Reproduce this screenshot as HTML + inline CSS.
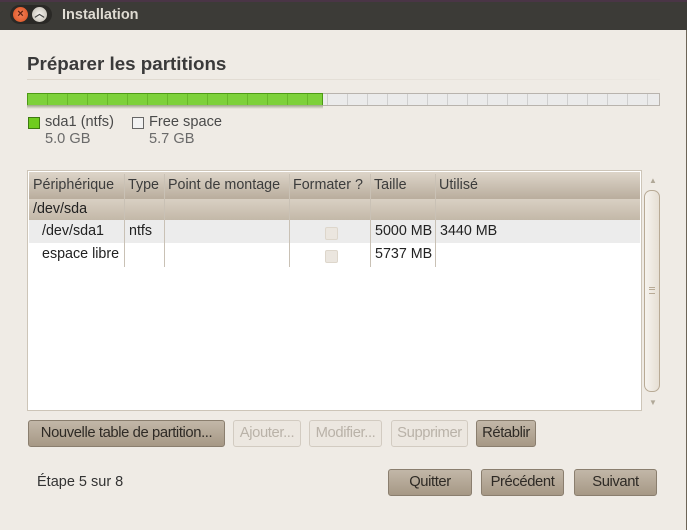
<!DOCTYPE html><html><head><style>
body{margin:0;width:687px;height:530px;overflow:hidden;background:#3c3b37;font-family:"Liberation Sans",sans-serif;font-size:14.3px;color:#3c3c3c}
.a{position:absolute}
.win{left:0;top:30px;width:686px;height:500px;background:#efebe5;border-right:1px solid #6d6557}
.btn{position:absolute;box-sizing:border-box;border:1px solid #8a7e6e;border-radius:3px;background:linear-gradient(#c2b7a8,#a69885);text-align:center;line-height:24px;font-size:14.8px;color:#2e2a25;letter-spacing:-0.4px;white-space:nowrap}
.dis{border-color:#d2cbc1;background:#ece7e0;color:#b9b2a8}
.cell{position:absolute;white-space:nowrap}
.vl{position:absolute;width:1px;background:#c9c1b5}
.cb{position:absolute;width:11px;height:11px;border:1px solid #ddd6cb;border-radius:2px;background:#ebe6df}
</style></head><body>
<div class="a" style="left:0;top:0;width:687px;height:2px;background:#4a3546"></div>
<div class="a" style="left:10px;top:5px;width:42px;height:19px;border-radius:10px;background:#2a2926"></div>
<div class="a" style="left:13px;top:7px;width:15px;height:15px;border-radius:50%;background:radial-gradient(#f3815a,#d9501e);color:#5a2010;font-size:11px;text-align:center;line-height:15px;font-weight:bold">×</div>
<div class="a" style="left:32px;top:7px;width:15px;height:15px;border-radius:50%;background:radial-gradient(#f5f3ee,#bdb8ae);color:#444;font-size:10px;text-align:center;line-height:16px;font-weight:bold">︿</div>
<div class="a" style="left:62px;top:7px;color:#dfdbd2;font-weight:bold;font-size:14.5px">Installation</div>
<div class="a win"></div>
<div class="a" style="left:27px;top:53px;font-weight:bold;font-size:18.8px;color:#3a3a3a">Préparer les partitions</div>
<div class="a" style="left:27px;top:79px;width:633px;height:1px;background:linear-gradient(90deg,#ddd6cc,#ece8e2)"></div>
<div class="a" style="left:27px;top:93px;width:633px;height:13px;box-sizing:border-box;border:1px solid #b8b3ad;background:repeating-linear-gradient(90deg,#ebebeb 0 19px,#cfcfcf 19px 20px)"></div>
<div class="a" style="left:27px;top:93px;width:296px;height:13px;box-sizing:border-box;border:1px solid #4c9a14;background:repeating-linear-gradient(90deg,#7dd13a 0 19px,#69b82a 19px 20px)"></div>
<div class="a" style="left:27px;top:105px;width:296px;height:4px;background:linear-gradient(#9aa585,#efebe5)"></div>
<div class="a" style="left:28px;top:117px;width:10px;height:10px;border:1px solid #3d7a10;background:#6fcc1e"></div>
<div class="a" style="left:45px;top:114px;font-size:14.6px;color:#4a4a4a">sda1 (ntfs)</div>
<div class="a" style="left:45px;top:131px;font-size:14.6px;color:#6a6a6a">5.0 GB</div>
<div class="a" style="left:132px;top:117px;width:10px;height:10px;border:1px solid #666;background:#f2f2f2"></div>
<div class="a" style="left:149px;top:114px;font-size:14.6px;color:#4a4a4a">Free space</div>
<div class="a" style="left:149px;top:131px;font-size:14.6px;color:#6a6a6a">5.7 GB</div>
<div class="a" style="left:27px;top:170px;width:615px;height:241px;box-sizing:border-box;border:1px solid #cdc5b8;background:#fff"></div>
<div class="a" style="left:29px;top:172px;width:611px;height:27px;background:linear-gradient(#ddd5c9,#b9ad9d)"></div>
<div class="a" style="left:29px;top:199px;width:611px;height:21px;background:linear-gradient(#d9d0c3,#c3b8a8)"></div>
<div class="a" style="left:29px;top:220px;width:611px;height:23px;background:#ececec"></div>
<div class="vl" style="left:124px;top:174px;height:93px"></div>
<div class="vl" style="left:164px;top:174px;height:93px"></div>
<div class="vl" style="left:289px;top:174px;height:93px"></div>
<div class="vl" style="left:370px;top:174px;height:93px"></div>
<div class="vl" style="left:435px;top:174px;height:93px"></div>
<div class="cell" style="left:33px;top:177px">Périphérique</div>
<div class="cell" style="left:128px;top:177px">Type</div>
<div class="cell" style="left:168px;top:177px">Point de montage</div>
<div class="cell" style="left:293px;top:177px">Formater ?</div>
<div class="cell" style="left:374px;top:177px">Taille</div>
<div class="cell" style="left:439px;top:177px">Utilisé</div>
<div class="cell" style="left:33px;top:201px;color:#222">/dev/sda</div>
<div class="cell" style="left:42px;top:223px;color:#222">/dev/sda1</div>
<div class="cell" style="left:129px;top:223px;color:#222">ntfs</div>
<div class="cb" style="left:325px;top:227px"></div>
<div class="cell" style="left:375px;top:223px;color:#222">5000 MB</div>
<div class="cell" style="left:440px;top:223px;color:#222">3440 MB</div>
<div class="cell" style="left:42px;top:246px;color:#222">espace libre</div>
<div class="cb" style="left:325px;top:250px"></div>
<div class="cell" style="left:375px;top:246px;color:#222">5737 MB</div>
<div class="a" style="left:649px;top:176px;font-size:8px;color:#b0a898">▲</div>
<div class="a" style="left:649px;top:398px;font-size:8px;color:#b0a898">▼</div>
<div class="a" style="left:644px;top:190px;width:16px;height:202px;box-sizing:border-box;border:1px solid #b8aa95;border-radius:7px;background:linear-gradient(90deg,#f6f3ee,#e6dfd4)"></div>
<div class="a" style="left:649px;top:287px;width:6px;height:5px;border-top:1px solid #b8aa95;border-bottom:1px solid #b8aa95"></div>
<div class="a" style="left:649px;top:289px;width:6px;height:1px;background:#b8aa95"></div>
<div class="btn" style="left:28px;top:420px;width:197px;height:27px">Nouvelle table de partition...</div>
<div class="btn dis" style="left:233px;top:420px;width:68px;height:27px">Ajouter...</div>
<div class="btn dis" style="left:309px;top:420px;width:73px;height:27px">Modifier...</div>
<div class="btn dis" style="left:391px;top:420px;width:77px;height:27px">Supprimer</div>
<div class="btn" style="left:476px;top:420px;width:60px;height:27px">Rétablir</div>
<div class="a" style="left:37px;top:474px;font-size:14.5px;color:#333">Étape 5 sur 8</div>
<div class="btn" style="left:388px;top:469px;width:84px;height:27px">Quitter</div>
<div class="btn" style="left:481px;top:469px;width:83px;height:27px">Précédent</div>
<div class="btn" style="left:574px;top:469px;width:83px;height:27px">Suivant</div>
</body></html>
